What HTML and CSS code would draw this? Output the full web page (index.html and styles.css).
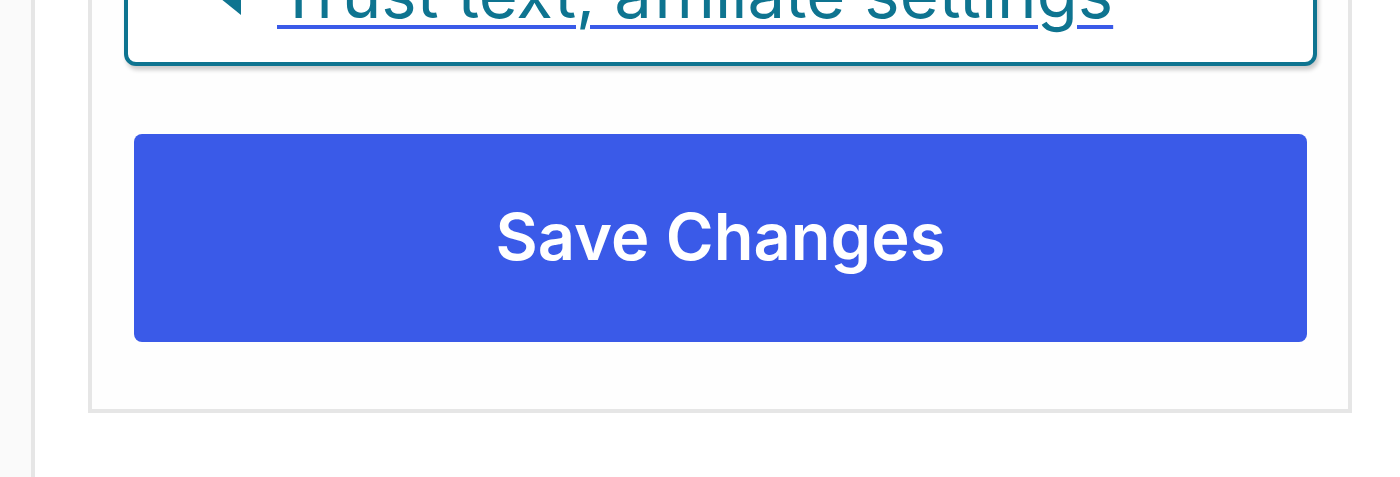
FILE: index.html
```html
<!DOCTYPE html>
<html lang="en">
<head>
<meta charset="utf-8">
<title>Settings</title>
<link rel="stylesheet" href="styles.css">
</head>
<body>
<div class="layout">
  <aside class="sidebar"></aside>
  <main class="main">
    <section class="panel">
      <div class="details">
        <div class="summary">
          <svg class="marker" width="31" height="50" viewBox="0 0 31 50" aria-hidden="true"><polygon points="0,25 31,0 31,50" fill="#0e7490"/></svg>
          <a class="summary-link" href="#">Trust text, affiliate settings</a>
        </div>
      </div>
      <button class="save-btn" type="button">Save Changes</button>
    </section>
  </main>
</div>
</body>
</html>
```
FILE: styles.css
```css
html, body {
  margin: 0;
  padding: 0;
  background: #ffffff;
  font-family: Inter, "Noto Sans", "Liberation Sans", sans-serif;
}

.layout {
  display: flex;
  height: 100vh;
  overflow: hidden;
}

.sidebar {
  width: 31px;
  flex: none;
  background: #fafafa;
  border-right: 4px solid #e6e6e6;
}

.main {
  flex: 1;
  display: flex;
  flex-direction: column;
  justify-content: flex-end;
  padding: 0 48px 64px 53px;
}

.panel {
  flex: none;
  border: 4px solid #e6e6e6;
  background: #fefefe;
  padding: 32px 31px 67px 32px;
}

.details {
  border: 4px solid #0e7490;
  border-radius: 12px;
  background: #ffffff;
  box-shadow: 2px 4px 4px rgba(0, 0, 0, 0.2);
  padding: 24px 40px 23px 82px;
}

.summary {
  display: flex;
  align-items: flex-end;
  gap: 36px;
}

.marker {
  flex: none;
  margin-bottom: 24px;
}

.summary-link {
  font-size: 67px;
  line-height: 91px;
  color: #0e7490;
  text-decoration: underline;
  text-decoration-color: #3a5ae8;
  text-decoration-thickness: 4px;
  text-underline-offset: 7px;
}

.save-btn {
  display: block;
  width: calc(100% - 20px);
  margin: 68px 10px 0 10px;
  height: 208px;
  border: none;
  border-radius: 8px;
  background: #3a5ae8;
  color: #ffffff;
  font-family: Inter, "Noto Sans", "Liberation Sans", sans-serif;
  font-weight: 600;
  font-size: 65px;
  padding: 0 0 4px 0;
}
```
